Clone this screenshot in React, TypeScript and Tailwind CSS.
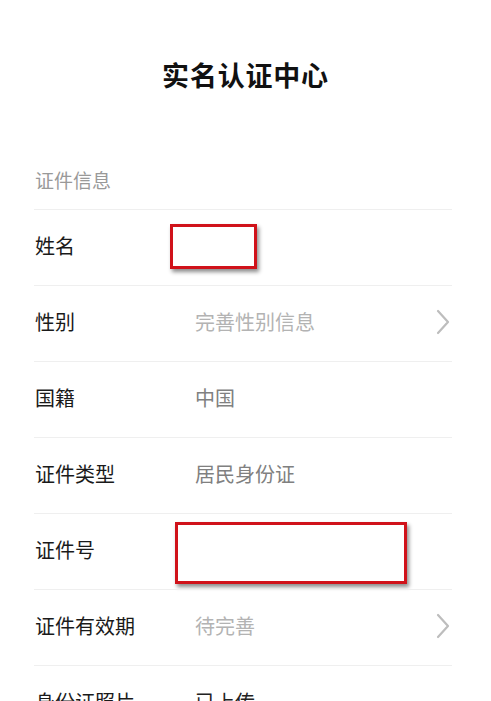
import React from "react";

const Chevron = () => (
  <svg width="16" height="26" viewBox="0 0 16 26" className="ml-auto mr-[1px]">
    <path d="M3 2 L13 13 L3 24" fill="none" stroke="#bdbdbd" strokeWidth="2.2" strokeLinecap="round" strokeLinejoin="round" />
  </svg>
);

type Row = { label: string; value?: string; tone?: "mid" | "light" | "dark"; chevron?: boolean; box?: "a" | "b" };

const rows: Row[] = [
  { label: "姓名", box: "a" },
  { label: "性别", value: "完善性别信息", tone: "light", chevron: true },
  { label: "国籍", value: "中国", tone: "mid" },
  { label: "证件类型", value: "居民身份证", tone: "mid" },
  { label: "证件号", box: "b" },
  { label: "证件有效期", value: "待完善", tone: "light", chevron: true },
  { label: "身份证照片", value: "已上传", tone: "dark" },
];

export default function App() {
  return (
    <div
      className="w-[491px] h-[701px] overflow-hidden bg-white"
      style={{ fontFamily: '"Noto Sans CJK SC", "Noto Sans", sans-serif' }}
    >
      <div className="pt-[57px] text-center text-[27px] leading-[36px] font-bold text-[#111] tracking-[0.8px]">
        实名认证中心
      </div>
      <div className="ml-[34px] w-[418px]">
        <div className="mt-[73px] pb-[15px] text-[19px] leading-[28px] text-[#999] pl-[1px]">证件信息</div>
        {rows.map((r) => (
          <div key={r.label} className="relative h-[76px] pb-[3px] border-t border-[#efefef] flex items-center">
            <div className="w-[161px] pl-[1px] text-[20px] text-[#1a1a1a]">{r.label}</div>
            {r.value && (
              <div
                className={
                  "text-[20px] " +
                  (r.tone === "light" ? "text-[#b3b3b3]" : r.tone === "mid" ? "text-[#808080]" : "text-[#222]")
                }
              >
                {r.value}
              </div>
            )}
            {r.chevron && <Chevron />}
            {r.box === "a" && (
              <div className="absolute left-[136px] top-[14px] w-[87px] h-[45px] border-[3px] border-[#d0121a] shadow-[2px_3px_4px_rgba(0,0,0,0.45)]" />
            )}
            {r.box === "b" && (
              <div className="absolute left-[141px] top-[8px] w-[232px] h-[62px] border-[3px] border-[#d0121a] shadow-[2px_3px_4px_rgba(0,0,0,0.45)]" />
            )}
          </div>
        ))}
      </div>
    </div>
  );
}
